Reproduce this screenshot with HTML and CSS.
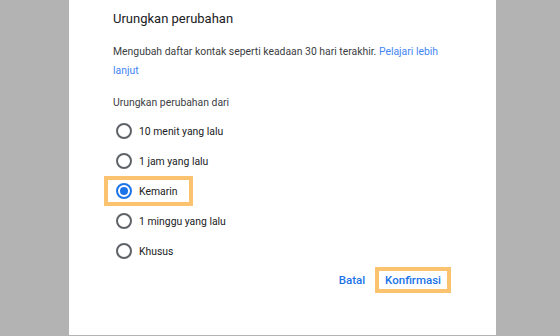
FILE: index.html
```html
<!DOCTYPE html>
<html lang="id">
<head>
  <meta charset="UTF-8">
  <title>Urungkan perubahan</title>
  <meta name="viewport" content="width=device-width,initial-scale=1">
  <link rel="stylesheet" href="styles.css">
</head>
<body>
  <div class="dialog">
    <h2 class="title">Urungkan perubahan</h2>
    <p class="desc">Mengubah daftar kontak seperti keadaan 30 hari terakhir. <a href="#">Pelajari lebih lanjut</a></p>

    <div class="group-label">Urungkan perubahan dari</div>
    <div class="options">
      <label class="option"><span class="radio"></span>10 menit yang lalu</label>
      <label class="option"><span class="radio"></span>1 jam yang lalu</label>
      <label class="option marked"><span class="radio checked"></span>Kemarin</label>
      <label class="option"><span class="radio"></span>1 minggu yang lalu</label>
      <label class="option"><span class="radio"></span>Khusus</label>
    </div>

    <div class="actions">
      <button class="btn">Batal</button>
      <button class="btn marked">Konfirmasi</button>
    </div>
  </div>
</body>
</html>
```

FILE: styles.css
```css
:root {
  --blue: #1a73e8;
  --text: #3c4043;
  --dark: #202124;
  --muted: #5f6368;
  --mark: #fbc36f;
}
* { box-sizing: border-box; margin: 0; padding: 0; }
body {
  background: #b3b3b3;
  font-family: Roboto, "Liberation Sans", sans-serif;
  color: var(--text);
  width: 560px; height: 336px; overflow: hidden;
}
.dialog {
  margin-left: 69px; width: 427px; height: 335px;
  background: #fff;
  padding: 9px 0 0 44px;
}
.title {
  font-size: 13px; font-weight: 400; line-height: 20px;
  color: var(--dark);
}
.desc {
  margin-top: 13px; width: 340px;
  font-size: 10.4px; line-height: 19px;
}
.desc a { color: #4285f4; text-decoration: none; }
.group-label {
  margin-top: 13px;
  font-size: 10.4px; line-height: 20px;
}
.options {
  margin: 7px 0 0 -5px;
  display: flex; flex-direction: column; gap: 8px;
}
.option {
  display: flex; align-items: center; gap: 7px;
  width: fit-content; height: 22px; padding: 0 12px 0 8px;
  font-size: 10.4px; color: var(--dark);
}
.radio {
  width: 16px; height: 16px; border-radius: 50%;
  border: 2px solid var(--muted);
  display: flex; align-items: center; justify-content: center;
}
.radio.checked { border-color: var(--blue); }
.radio.checked::after {
  content: ""; width: 8px; height: 8px; border-radius: 50%;
  background: var(--blue);
}
.marked { outline: 4px solid var(--mark); }
.actions {
  margin: 9px 49px 0 0;
  display: flex; justify-content: flex-end; gap: 8px;
}
.btn {
  height: 18px; padding: 0 6px;
  background: none; border: none;
  font-family: inherit; font-size: 11.5px; font-weight: 500;
  color: var(--blue); cursor: pointer;
}
```
